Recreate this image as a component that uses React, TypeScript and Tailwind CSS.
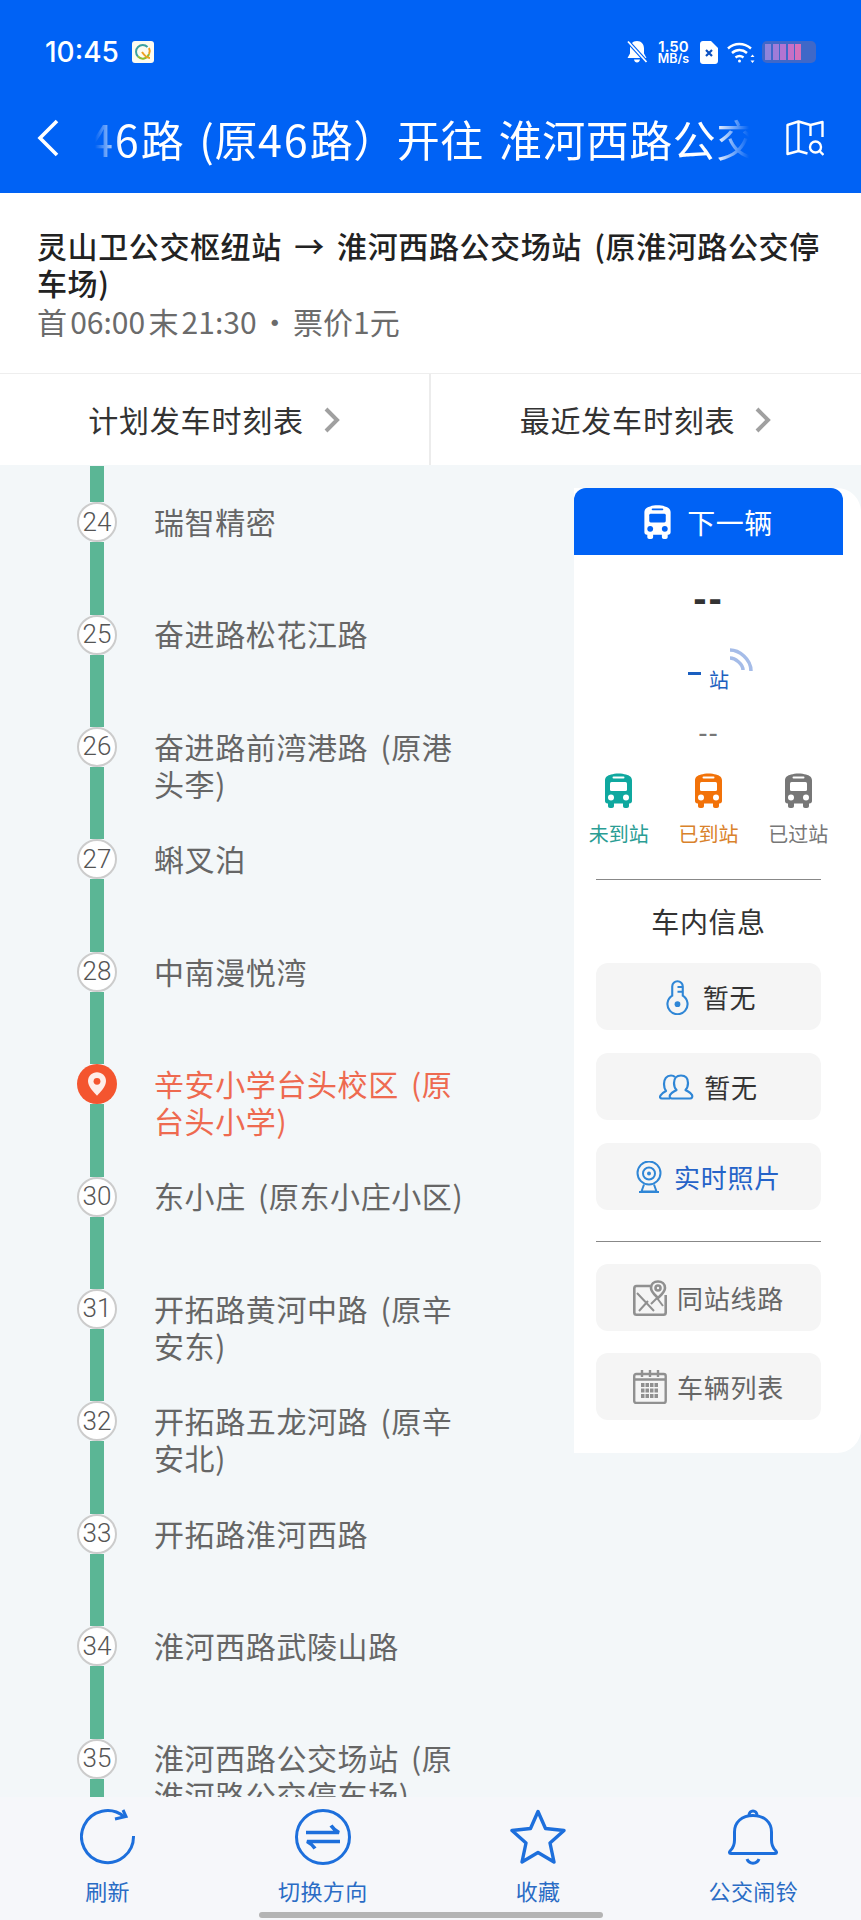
const cjk = "font-['Noto_Sans_CJK_SC','Noto_Sans',sans-serif]";

const stops = [
  { no: '24', lines: ['瑞智精密'] },
  { no: '25', lines: ['奋进路松花江路'] },
  { no: '26', lines: ['奋进路前湾港路 (原港', '头李)'] },
  { no: '27', lines: ['蝌叉泊'] },
  { no: '28', lines: ['中南漫悦湾'] },
  { no: '29', lines: ['辛安小学台头校区 (原', '台头小学)'], current: true },
  { no: '30', lines: ['东小庄 (原东小庄小区)'] },
  { no: '31', lines: ['开拓路黄河中路 (原辛', '安东)'] },
  { no: '32', lines: ['开拓路五龙河路 (原辛', '安北)'] },
  { no: '33', lines: ['开拓路淮河西路'] },
  { no: '34', lines: ['淮河西路武陵山路'] },
  { no: '35', lines: ['淮河西路公交场站 (原', '淮河路公交停车场)'] },
];

function BusIcon({ className, innerClass }: { className: string; innerClass: string }) {
  return (
    <svg viewBox="0 0 27 35" className={className}>
      <path className="fill-current" d="M6 1.500C10 0 17 0 21 1.500c3.500 1 6 2.500 6 6V28c0 1.500-1 2.500-2.500 2.500h-.5V33c0 1.200-.8 2-2 2h-2c-1.200 0-2-.8-2-2v-2.500H9V33c0 1.200-.8 2-2 2H5c-1.200 0-2-.8-2-2v-2.500h-.5C1 30.500 0 29.500 0 28V7.500c0-3.500 2.500-5 6-6z" />
      <rect className={innerClass} x="7.500" y="3.500" width="12" height="2" rx="1" />
      <rect className={innerClass} x="5" y="9" width="17" height="9" rx="1.500" />
      <circle className={innerClass} cx="6" cy="24.500" r="3" />
      <circle className={innerClass} cx="21" cy="24.500" r="3" />
    </svg>
  );
}

function StatusIcons() {
  return (
    <div className="flex items-center">
      <svg viewBox="0 0 22 24" className="w-[22px] h-[24px] text-white">
        <path className="fill-current" d="M11 1c-4.500 0-7 3.200-7 7.500v5L1.500 18h19L18 13.500v-5C18 4.200 15.500 1 11 1zM8 19.500c.3 2 1.500 3 3 3s2.700-1 3-3z" />
        <path d="M2 1.500 20.500 22" stroke="#0062f5" strokeWidth="4" />
        <path d="M2 1.500 20.500 22" stroke="#fff" strokeWidth="1.800" />
      </svg>
      <div className="ml-[7px] w-[37px] flex flex-col items-center font-['Inter',sans-serif] text-white font-semibold">
        <span className="text-[15px] leading-[13px]">1.50</span>
        <span className="text-[12.500px] leading-[12px]">MB/s</span>
      </div>
      <svg viewBox="0 0 18 23" className="ml-[8px] w-[18px] h-[23px]">
        <path fill="#fff" d="M3 0h8l7 7v13c0 1.700-1.300 3-3 3H3c-1.700 0-3-1.300-3-3V3c0-1.700 1.300-3 3-3z" />
        <path d="M6 9l6 6M12 9l-6 6" stroke="#0a4fc0" strokeWidth="2.200" />
      </svg>
      <svg viewBox="0 0 28 24" className="ml-[9px] w-[28px] h-[24px]" fill="none" stroke="#fff" strokeWidth="2.400">
        <path d="M1 8.500C7.500 2.500 17 2.500 24 8.500" />
        <path d="M5 13c4.500-4 10.500-4 15 0" />
        <path d="M8.500 17.500c2.500-2 5.500-2 8 0" />
        <circle cx="12.500" cy="21" r="1.500" fill="#fff" stroke="none" />
        <path d="M25.500 14.500l-2 2.500h4zM25.500 23l-2-2.500h4z" fill="#fff" stroke="none" />
      </svg>
      <div className="ml-[7px] w-[54px] h-[22px] rounded-[5px] bg-[#3f68c8] flex items-center gap-[1.500px] px-[3px]">
        <span className="w-[6px] h-[16px] bg-[#8f84dc]" />
        <span className="w-[6px] h-[16px] bg-[#a07cd8]" />
        <span className="w-[6px] h-[16px] bg-[#b274d2]" />
        <span className="w-[6px] h-[16px] bg-[#c670c6]" />
        <span className="w-[6px] h-[16px] bg-[#d670ba]" />
      </div>
    </div>
  );
}

function Header() {
  return (
    <header className="h-[193px] shrink-0 bg-[#0062f5] text-white">
      <div className="h-[104px] flex items-center justify-between pl-[45px] pr-[45px]">
        <div className="flex items-center">
          <span className="font-['Inter',sans-serif] text-[28px] font-medium leading-none">10:45</span>
          <svg viewBox="0 0 22 22" className="ml-[13px] w-[22px] h-[22px]">
            <rect width="22" height="22" rx="3" fill="#fdfbf0" />
            <path d="M15.500 6A6.500 6.500 0 0 0 6 15.500" fill="none" stroke="#3aa0a0" strokeWidth="2" />
            <path d="M6 15.500A6.500 6.500 0 0 0 17 13" fill="none" stroke="#8dbb35" strokeWidth="2" />
            <path d="M17 7A6.500 6.500 0 0 1 17 13" fill="none" stroke="#eea020" strokeWidth="2" />
            <path d="M10 11c2 3 5 6 8 6" fill="none" stroke="#eea020" strokeWidth="2" />
          </svg>
        </div>
        <StatusIcons />
      </div>
      <div className="h-[68px] flex items-center">
        <svg viewBox="0 0 22 38" className="ml-[37px] w-[22px] h-[38px]" fill="none" stroke="#fff" strokeWidth="3.600">
          <path d="M20 2 3 19l17 17" />
        </svg>
        <div className="ml-[36px] w-[660px] overflow-hidden [mask-image:linear-gradient(to_right,transparent_0,#000_26px,#000_620px,transparent_654px)]">
          <p className={`${cjk} -ml-[6px] whitespace-nowrap text-[43px] leading-[60px] tracking-[0.5px] [word-spacing:5px]`}>
            <span className="tracking-[2px]">46</span>路 (原<span className="tracking-[2px]">46</span>路）开往 淮河西路公交场站 (原淮河路公交停车场)
          </p>
        </div>
        <svg viewBox="0 0 38 37" className="ml-[31px] w-[38px] h-[37px]" fill="none" stroke="#fff" strokeWidth="2.400" strokeLinejoin="round">
          <path d="M36.500 17V2l-12 3-12-3.500L1.500 5v29l11-3 9 2.500" />
          <path d="M12.500 1.500V31M24.500 5v11" />
          <circle cx="29.500" cy="27" r="5.500" />
          <path d="m33.500 31 4 4" />
        </svg>
      </div>
    </header>
  );
}

function InfoCard() {
  return (
    <section className={`${cjk} h-[181px] shrink-0 bg-white px-[37px] pt-[34px] border-b border-[#eeeeee]`}>
      <p className="text-[30px] leading-[37px] font-medium tracking-[0.6px] [word-spacing:5px] text-[#222222]">
        灵山卫公交枢纽站 → 淮河西路公交场站 (原淮河路公交停车场)
      </p>
      <p className="mt-[2px] text-[30px] leading-[37px] [word-spacing:-3.500px] text-[#6b6b6b]">首 06:00 末 21:30 · 票价1元</p>
    </section>
  );
}

function Tabs() {
  const label = ['计划发车时刻表', '最近发车时刻表'];
  return (
    <div className={`${cjk} h-[91px] shrink-0 bg-white flex`}>
      {label.map((t, i) => (
        <div key={t} className={`flex items-center justify-center gap-[19px] ${i === 0 ? 'w-[431px] border-r-2 border-[#ececec]' : 'flex-1'}`}>
          <span className="text-[30px] tracking-[0.8px] text-[#333333]">{t}</span>
          <svg viewBox="0 0 17 26" className="w-[18px] h-[26px]" fill="none" stroke="#a0a0a0" strokeWidth="4">
            <path d="M2.500 2 13.500 13 2.500 24" />
          </svg>
        </div>
      ))}
    </div>
  );
}

function StopRow({ no, lines, current }: { no: string; lines: string[]; current?: boolean }) {
  return (
    <div className="h-[112.4px] flex pl-[77px]">
      <div className="w-[40px] shrink-0 flex flex-col items-center">
        <div className="flex-1 w-[14px] bg-[#5bb695]" />
        {current ? (
          <div className="w-[40px] h-[40px] rounded-full bg-[#f4552f] flex items-center justify-center">
            <svg viewBox="0 0 20 26" className="w-[18px] h-[24px]">
              <path fill="#fff" fillOpacity="0.9" d="M10 0C4.500 0 0 4.300 0 9.800 0 16 6.500 22.500 10 26c3.500-3.500 10-10 10-16.200C20 4.300 15.500 0 10 0z" />
              <circle cx="10" cy="10" r="3.800" fill="#f4552f" />
            </svg>
          </div>
        ) : (
          <div className="w-[40px] h-[40px] rounded-full bg-white border-2 border-[#cccccc] flex items-center justify-center font-['Roboto',sans-serif] font-light text-[26px] text-[#555555]">
            {no}
          </div>
        )}
        <div className="flex-1 w-[14px] bg-[#5bb695]" />
      </div>
      <div className={`${cjk} ml-[37px] pt-[37px] text-[30px] leading-[37px] tracking-[0.6px] [word-spacing:5px] whitespace-nowrap ${current ? 'text-[#ee6a50]' : 'text-[#666666]'}`}>
        {lines.map((l) => (
          <p key={l}>{l}</p>
        ))}
      </div>
    </div>
  );
}

function InfoButton({ icon, text, textClass }: { icon: React.ReactNode; text: string; textClass: string }) {
  return (
    <div className="h-[67px] rounded-[12px] bg-[#f5f5f5] flex items-center justify-center gap-[12px]">
      {icon}
      <span className={`text-[26px] tracking-[0.8px] ${textClass}`}>{text}</span>
    </div>
  );
}

function NextBusPanel() {
  const legend = [
    { label: '未到站', bus: 'text-[#0fa89f]', text: 'text-[#2a9d94]' },
    { label: '已到站', bus: 'text-[#f27209]', text: 'text-[#d9822b]' },
    { label: '已过站', bus: 'text-[#777777]', text: 'text-[#777777]' },
  ];
  return (
    <aside className={`${cjk} mt-[23px] self-start w-[287px] shrink-0 bg-white rounded-r-[24px]`}>
      <div className="w-[269px] flex flex-col pb-[33px]">
        <div className="h-[67px] rounded-t-[12px] bg-[#0062f5] flex items-center justify-center gap-[16px] text-white">
          <BusIcon className="w-[27px] h-[34px] text-white" innerClass="fill-[#0062f5]" />
          <span className="text-[28px] tracking-[0.5px]">下一辆</span>
        </div>
        <div className="mt-[23px] h-[40px] flex items-center justify-center font-['Liberation_Sans',sans-serif] text-[40px] font-bold tracking-[2px] text-[#333333]">
          --
        </div>
        <div className="mt-[42px] h-[40px] flex items-center justify-center">
          <div className="relative flex items-center gap-[8px] text-[#2060c0]">
            <span className="mb-[14px] w-[13px] h-[3px] bg-[#1a5fc0]" />
            <span className="text-[20px] leading-[24px]">站</span>
            <svg viewBox="0 0 24 24" className="absolute -top-[20px] -right-[24px] w-[24px] h-[24px]" fill="none" stroke="#a5bce8" strokeWidth="3.500">
              <path d="M1 2c9 0 21 9 21 21" />
              <path d="M1 10c5 0 13 6 13 12" />
            </svg>
          </div>
        </div>
        <div className="mt-[18px] h-[30px] flex items-center justify-center font-['Liberation_Sans',sans-serif] text-[28px] tracking-[1px] text-[#777777]">
          --
        </div>
        <div className="mt-[25px] grid grid-cols-3">
          {legend.map((l) => (
            <div key={l.label} className="flex flex-col items-center">
              <BusIcon className={`w-[27px] h-[35px] ${l.bus}`} innerClass="fill-white" />
              <span className={`mt-[12px] text-[20px] leading-[28px] ${l.text}`}>{l.label}</span>
            </div>
          ))}
        </div>
        <div className="mx-[22px] mt-[31px] h-px bg-[#888888]" />
        <div className="mt-[21px] h-[40px] flex items-center justify-center text-[28px] tracking-[0.6px] text-[#333333]">车内信息</div>
        <div className="mx-[22px] mt-[22px] flex flex-col gap-[23px]">
          <InfoButton
            text="暂无"
            textClass="text-[#333333]"
            icon={
              <svg viewBox="0 0 24 36" className="ml-[5px] mr-[2px] w-[23px] h-[36px]" fill="none" stroke="#2f86d6" strokeWidth="2.200">
                <path d="M6.500 16.500V7a5.500 5.500 0 0 1 11 0v9.500a10.500 10.500 0 1 1-11 0z" />
                <path d="M12 7.500h5.500M12 12.500h5.500" />
                <circle cx="12" cy="25.500" r="3" fill="#2f86d6" stroke="none" />
              </svg>
            }
          />
          <InfoButton
            text="暂无"
            textClass="text-[#333333]"
            icon={
              <svg viewBox="0 0 36 26" className="-mr-[3px] w-[36px] h-[26px]" fill="none" stroke="#2f86d6" strokeWidth="2.200" strokeLinejoin="round">
                <path d="M11 24.500H3c-2 0-2.500-1.500-1.500-3 1-2 3.500-3.500 5.500-4.500-1.500-2-2-4-2-7 0-5 2.500-8.500 7-8.500 1.500 0 3 .5 4 1.500" />
                <path d="M13 24.500c-2 0-2.800-1.500-2-3.500 1-2.500 4.500-3.500 6.500-5-1.500-1.500-2.500-4-2.500-7 0-4.500 2.500-7.500 7-7.500s7 3 7 7.500c0 3-1 5.500-2.500 7 2 1.500 5.500 2.500 6.500 5 .8 2 0 3.500-2 3.500z" />
              </svg>
            }
          />
          <InfoButton
            text="实时照片"
            textClass="text-[#2563c8]"
            icon={
              <svg viewBox="0 0 26 32" className="w-[26px] h-[32px]" fill="none" stroke="#2f86d6" strokeWidth="2">
                <circle cx="13" cy="12" r="11.500" />
                <circle cx="13" cy="12.500" r="6" />
                <circle cx="13" cy="12.500" r="2" fill="#2f86d6" stroke="none" />
                <path d="M8 23.500 5.500 30.500h15L18 23.500M3 31h20" />
              </svg>
            }
          />
        </div>
        <div className="mx-[22px] mt-[31px] h-px bg-[#888888]" />
        <div className="mx-[22px] mt-[22px] flex flex-col gap-[22px]">
          <InfoButton
            text="同站线路"
            textClass="text-[#666666]"
            icon={
              <svg viewBox="0 0 34 36" className="-mr-[2px] w-[34px] h-[36px]" fill="none" stroke="#909090" strokeWidth="2.600">
                <path d="M17 6H3.500C2 6 1.300 7 1.300 8.500v24c0 1.500.7 2.200 2.200 2.200h27c1.500 0 2.200-.7 2.200-2.200V15" />
                <path d="M4 13l17 18M6 31l9-10M18 24l6-6 6 8" strokeWidth="2" />
                <path d="M25 1.500c-4 0-7 2.500-7 6.500 0 4 4 7 7 10 3-3 7-6 7-10 0-4-3-6.500-7-6.500z" fill="#f5f5f5" />
                <circle cx="25" cy="8" r="2.500" />
              </svg>
            }
          />
          <InfoButton
            text="车辆列表"
            textClass="text-[#666666]"
            icon={
              <svg viewBox="0 0 34 34" className="-mr-[2px] w-[34px] h-[34px]" fill="none" stroke="#909090" strokeWidth="2.400">
                <rect x="1.200" y="4" width="31.500" height="29" rx="2" />
                <path d="M1.500 9.500h31M9 0v7M17 0v7M25 0v7" />
                <path d="M8 15h18M8 20.500h18M8 26h18" strokeWidth="4" strokeDasharray="3.500 1" />
              </svg>
            }
          />
        </div>
      </div>
    </aside>
  );
}

function BottomBar() {
  const stroke = { fill: 'none', stroke: '#1d6fdc', strokeWidth: 3 };
  const items = [
    {
      label: '刷新',
      icon: (
        <svg viewBox="0 0 56 56" className="w-[56px] h-[56px]" {...stroke}>
          <path d="M53.500 27A26 26 0 1 1 44 7.500" />
          <path d="M43 1l3 6.500-11 2.500" />
        </svg>
      ),
    },
    {
      label: '切换方向',
      icon: (
        <svg viewBox="0 0 56 56" className="w-[56px] h-[56px]" {...stroke}>
          <circle cx="28" cy="28" r="26.500" />
          <path d="M11 23.500h33c-3-1.500-6-4-8-7M45 32.500H12c3 1.500 6 4 8 7" strokeWidth="3.600" />
        </svg>
      ),
    },
    {
      label: '收藏',
      icon: (
        <svg viewBox="0 0 56 56" className="w-[56px] h-[56px]" {...stroke} strokeLinejoin="round">
          <path strokeWidth="3.400" d="M28 2.500l7.500 17 18.500 2-14 12.500 4 19L28 43.500 12 53l4-19L2 21.500l18.500-2z" />
        </svg>
      ),
    },
    {
      label: '公交闹铃',
      icon: (
        <svg viewBox="0 0 56 56" className="w-[56px] h-[56px]" {...stroke} strokeLinejoin="round">
          <path d="M6 44.500c-2 0-2-1.500-.5-3C8 39 9.500 37 9.500 31V23C9.500 13 17 6.500 28 6.500S46.500 13 46.500 23v8c0 6 1.500 8 4 10.500 1.500 1.500 1.500 3-.5 3z" />
          <path d="M24 6.500c0-6 8-6 8 0M22 50c2 5.500 10 5.500 12 0" />
        </svg>
      ),
    },
  ];
  return (
    <footer className={`${cjk} h-[123px] shrink-0 bg-[#f6f7fa] pt-[12px] flex flex-col`}>
      <div className="grid grid-cols-4">
        {items.map((it) => (
          <div key={it.label} className="flex flex-col items-center">
            {it.icon}
            <span className="mt-[10px] text-[22px] leading-[30px] tracking-[0.4px] text-[#2a6cc5]">{it.label}</span>
          </div>
        ))}
      </div>
      <div className="mt-[7px] mx-auto w-[344px] h-[6px] rounded-full bg-[#b4b4b4]" />
    </footer>
  );
}

export default function App() {
  return (
    <div className="w-[861px] h-[1920px] flex flex-col overflow-hidden bg-[#f3f7f9]">
      <Header />
      <InfoCard />
      <Tabs />
      <main className="flex-1 min-h-0 overflow-hidden flex">
        <div className="w-[574px] shrink-0 pt-px">
          {stops.map((s) => (
            <StopRow key={s.no} no={s.no} lines={s.lines} current={s.current} />
          ))}
        </div>
        <NextBusPanel />
      </main>
      <BottomBar />
    </div>
  );
}
